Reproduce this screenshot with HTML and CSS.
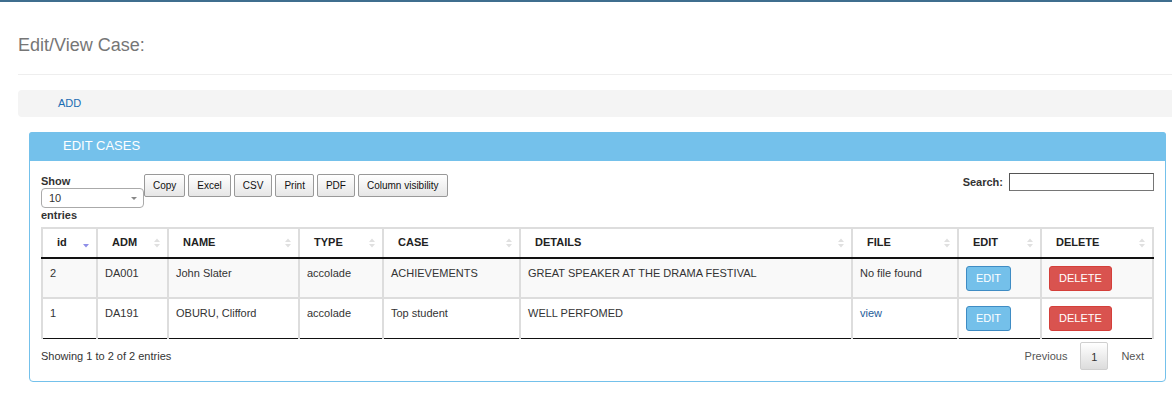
FILE: index.html
```html
<!DOCTYPE html>
<html>
<head>
<meta charset="utf-8">
<link rel="stylesheet" href="styles.css">
</head>
<body>
<div class="page">
  <h1 class="title">Edit/View Case:</h1>
  <div class="rule"></div>
  <div class="addbar"><a class="add-link">ADD</a></div>

  <div class="panel">
    <div class="panel-heading">EDIT CASES</div>
    <div class="panel-body">
      <div class="toolbar">
        <div class="length">
          <div class="lbl">Show</div>
          <div class="fake-select"><span>10</span><i class="caret"></i></div>
          <div class="lbl">entries</div>
        </div>
        <div class="buttons">
          <span class="dt-btn">Copy</span>
          <span class="dt-btn">Excel</span>
          <span class="dt-btn">CSV</span>
          <span class="dt-btn">Print</span>
          <span class="dt-btn">PDF</span>
          <span class="dt-btn">Column visibility</span>
        </div>
        <div class="search">
          <span class="lbl">Search:</span>
          <span class="search-input"></span>
        </div>
      </div>

      <table class="grid">
        <colgroup>
          <col class="c-id"><col class="c-adm"><col class="c-name"><col class="c-type"><col class="c-case"><col class="c-details"><col class="c-file"><col class="c-edit"><col class="c-delete">
        </colgroup>
        <thead>
          <tr>
            <th><div class="th-in"><span>id</span><svg class="sort" width="6" height="10" viewBox="0 0 6 10"><path d="M0 6 L6 6 L3 9.5 Z" fill="#8e8ee8"/></svg></div></th>
            <th><div class="th-in"><span>ADM</span><svg class="sort" width="6" height="10" viewBox="0 0 6 10"><path d="M0 4 L6 4 L3 0.5 Z M0 6 L6 6 L3 9.5 Z" fill="#e0e0e0"/></svg></div></th>
            <th><div class="th-in"><span>NAME</span><svg class="sort" width="6" height="10" viewBox="0 0 6 10"><path d="M0 4 L6 4 L3 0.5 Z M0 6 L6 6 L3 9.5 Z" fill="#e0e0e0"/></svg></div></th>
            <th><div class="th-in"><span>TYPE</span><svg class="sort" width="6" height="10" viewBox="0 0 6 10"><path d="M0 4 L6 4 L3 0.5 Z M0 6 L6 6 L3 9.5 Z" fill="#e0e0e0"/></svg></div></th>
            <th><div class="th-in"><span>CASE</span><svg class="sort" width="6" height="10" viewBox="0 0 6 10"><path d="M0 4 L6 4 L3 0.5 Z M0 6 L6 6 L3 9.5 Z" fill="#e0e0e0"/></svg></div></th>
            <th><div class="th-in"><span>DETAILS</span><svg class="sort" width="6" height="10" viewBox="0 0 6 10"><path d="M0 4 L6 4 L3 0.5 Z M0 6 L6 6 L3 9.5 Z" fill="#e0e0e0"/></svg></div></th>
            <th><div class="th-in"><span>FILE</span><svg class="sort" width="6" height="10" viewBox="0 0 6 10"><path d="M0 4 L6 4 L3 0.5 Z M0 6 L6 6 L3 9.5 Z" fill="#e0e0e0"/></svg></div></th>
            <th><div class="th-in"><span>EDIT</span><svg class="sort" width="6" height="10" viewBox="0 0 6 10"><path d="M0 4 L6 4 L3 0.5 Z M0 6 L6 6 L3 9.5 Z" fill="#e0e0e0"/></svg></div></th>
            <th><div class="th-in"><span>DELETE</span><svg class="sort" width="6" height="10" viewBox="0 0 6 10"><path d="M0 4 L6 4 L3 0.5 Z M0 6 L6 6 L3 9.5 Z" fill="#e0e0e0"/></svg></div></th>
          </tr>
        </thead>
        <tbody>
          <tr class="odd">
            <td>2</td><td>DA001</td><td>John Slater</td><td>accolade</td><td>ACHIEVEMENTS</td><td>GREAT SPEAKER AT THE DRAMA FESTIVAL</td><td>No file found</td>
            <td><span class="btn btn-edit">EDIT</span></td><td><span class="btn btn-delete">DELETE</span></td>
          </tr>
          <tr class="even">
            <td>1</td><td>DA191</td><td>OBURU, Clifford</td><td>accolade</td><td>Top student</td><td>WELL PERFOMED</td><td><a class="view-link">view</a></td>
            <td><span class="btn btn-edit">EDIT</span></td><td><span class="btn btn-delete">DELETE</span></td>
          </tr>
        </tbody>
      </table>

      <div class="footer">
        <div class="info">Showing 1 to 2 of 2 entries</div>
        <div class="paging">
          <span class="pg">Previous</span>
          <span class="pg pg-current">1</span>
          <span class="pg">Next</span>
        </div>
      </div>
    </div>
  </div>
</div>
</body>
</html>
```

FILE: styles.css
```css
* { box-sizing: border-box; }
html, body { margin: 0; padding: 0; background: #fff; }
body {
  font-family: "Liberation Sans", Arial, sans-serif;
  color: #333;
  border-top: 2px solid #3f6e8e;
  overflow: hidden;
}
.page { padding-left: 18px; }
.title {
  margin: 0;
  padding-top: 33px;
  font-size: 18px;
  line-height: 20px;
  font-weight: normal;
  color: #767676;
}
.rule { height: 1px; background: #eee; margin-top: 19px; }
.addbar {
  margin-top: 15px;
  height: 27px;
  background: #f4f4f4;
  border-radius: 4px 0 0 4px;
  padding-left: 40px;
  font-size: 11px;
  line-height: 27px;
}
.add-link { color: #1a6db3; }

.panel {
  margin: 15px 6px 0 11px;
  border: 1px solid #74c1eb;
  border-radius: 4px;
}
.panel-heading {
  background: #74c1eb;
  color: #fff;
  font-size: 13px;
  height: 29px;
  line-height: 27px;
  padding-left: 34px;
  margin: -1px -1px 0 -1px;
  border-radius: 3px 3px 0 0;
}
.panel-body { padding: 12px 12px 11px 11px; }

.toolbar { display: flex; align-items: flex-start; }
.lbl { font-size: 11px; font-weight: bold; line-height: 14px; }
.length { width: 103px; flex: none; }
.length .lbl:first-child { margin-top: 1px; }
.fake-select {
  position: relative;
  height: 20px;
  border: 1px solid #aaa;
  border-radius: 4px;
  font-size: 11px;
  line-height: 18px;
  padding-left: 7px;
}
.caret {
  position: absolute;
  right: 6px;
  top: 8px;
  border-left: 3px solid transparent;
  border-right: 3px solid transparent;
  border-top: 3px solid #888;
}
.buttons { display: flex; gap: 3px; flex: none; margin-top: 1px; }
.dt-btn {
  display: inline-block;
  height: 23px;
  line-height: 21px;
  padding: 0 8px;
  font-size: 10px;
  color: #111;
  border: 1px solid #999;
  border-radius: 2px;
  background: linear-gradient(#fff, #e6e6e6);
}
.search { margin-left: auto; display: flex; align-items: center; gap: 6px; margin-right: -1px; }
.search-input {
  display: block;
  width: 145px;
  height: 18px;
  border: 1px solid #767676;
  border-left-color: #555;
  border-top-color: #555;
}

.grid {
  width: 100%;
  margin-top: 5px;
  border-collapse: collapse;
  table-layout: fixed;
  font-size: 11px;
}
.c-id { width: 55px; }
.c-adm { width: 71px; }
.c-name { width: 131px; }
.c-type { width: 84px; }
.c-case { width: 137px; }
.c-details { width: 332px; }
.c-file { width: 106px; }
.c-edit { width: 83px; }
.c-delete { width: 112px; }
.grid th, .grid td { border: 2px solid #ddd; text-align: left; }
.grid th {
  padding: 7px 7px 8px 14px;
  font-weight: bold;
  line-height: 13px;
  color: #222;
  border-bottom: 2px solid #111;
}
.th-in { display: flex; justify-content: space-between; align-items: center; }
.sort { display: block; }
.grid td {
  padding: 7px 8px 6px 7px;
  line-height: 15px;
  vertical-align: top;
  height: 40px;
}
.grid tbody tr:last-child td { border-bottom: 1px solid #111; }
.odd td { background: #f9f9f9; }
.even td { background: #fff; }
.view-link { color: #245c99; }
.btn {
  display: inline-block;
  height: 25px;
  line-height: 23px;
  padding: 0 9px;
  color: #fff;
  border-radius: 3px;
  font-size: 11px;
}
.btn-edit { background: #74c0ea; border: 1px solid #3f8cc4; }
.btn-delete { background: #d9534f; border: 1px solid #d43f3a; }

.footer {
  display: flex;
  justify-content: space-between;
  align-items: center;
  margin-top: 3px;
}
.info { font-size: 11px; }
.paging { display: flex; align-items: center; font-size: 11px; color: #555; margin-right: -4px; }
.pg { padding: 0 13px; line-height: 28px; }
.pg-current {
  height: 28px;
  width: 28px;
  padding: 0;
  text-align: center;
  color: #333;
  border: 1px solid #cfcfcf;
  border-radius: 2px;
  background: linear-gradient(#fff, #dcdcdc);
}
```
